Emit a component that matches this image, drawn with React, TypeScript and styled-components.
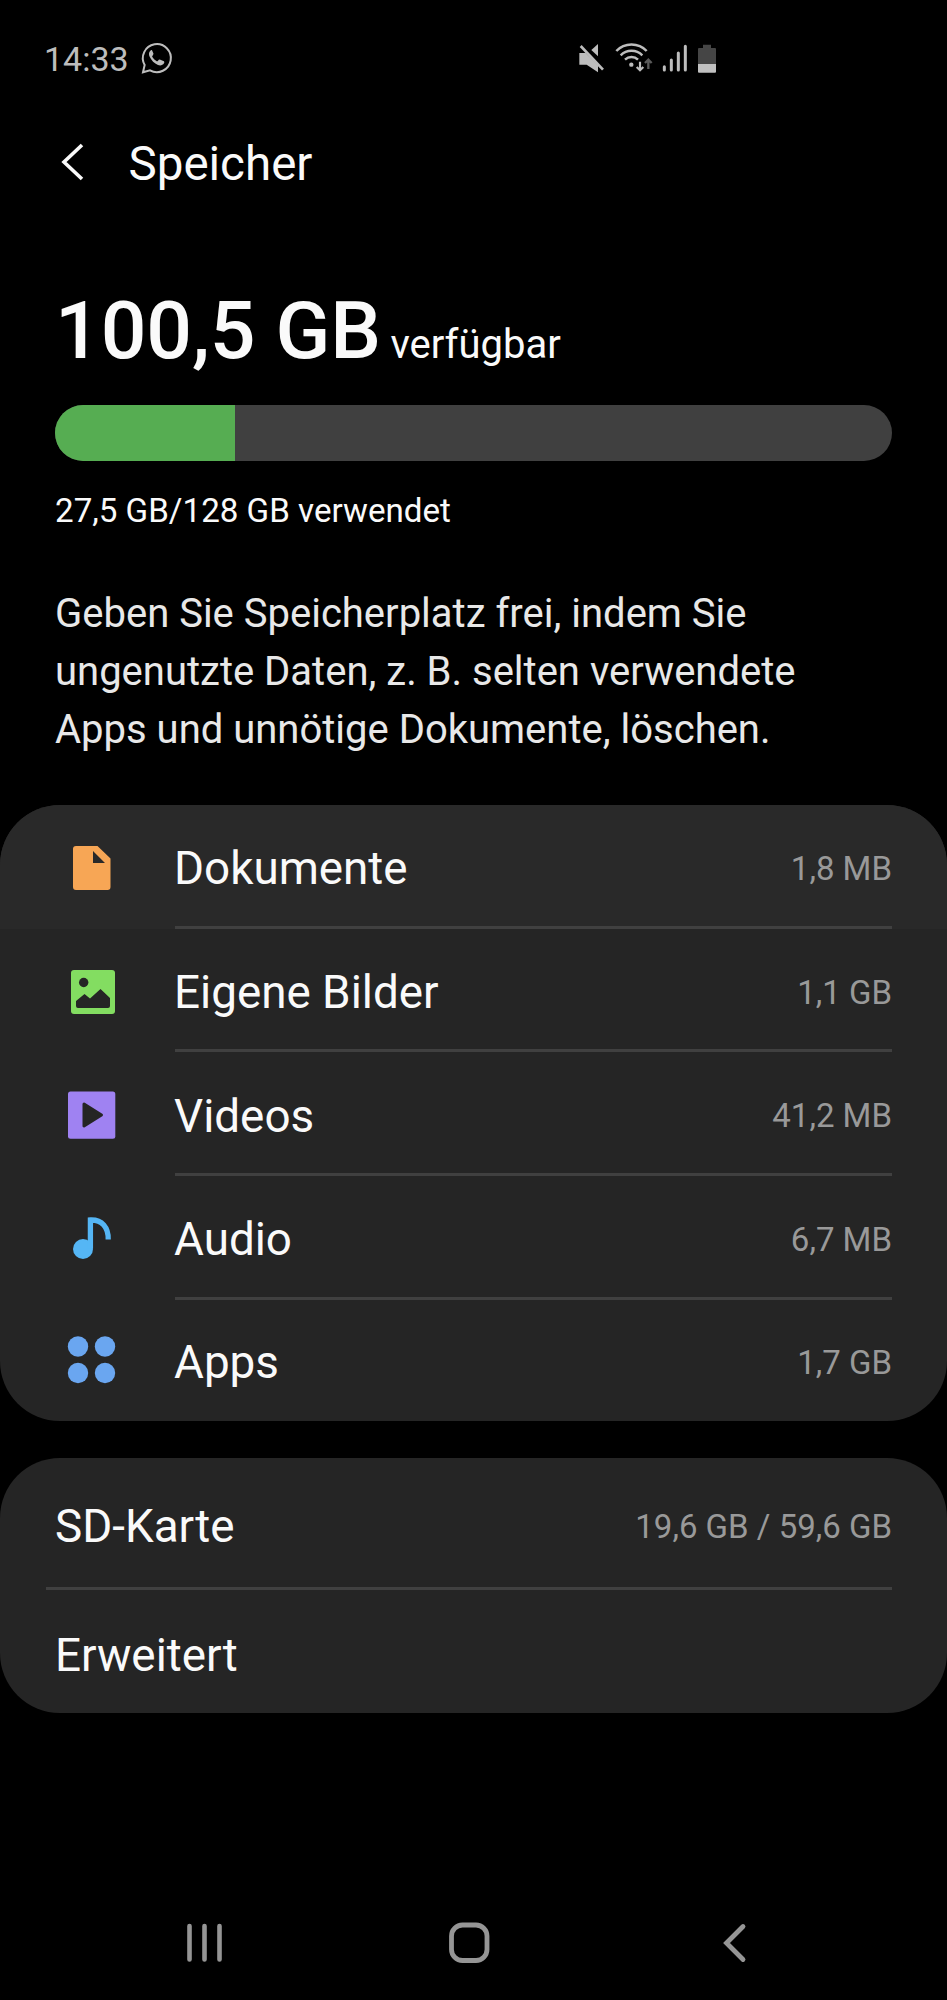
import React from "react";
import styled, { createGlobalStyle } from "styled-components";

const GlobalStyle = createGlobalStyle`
  *, *::before, *::after { box-sizing: border-box; }
  body { margin: 0; background: #000; }
`;

const Screen = styled.main`
  display: flex;
  flex-direction: column;
  width: 947px;
  height: 2000px;
  background: #000;
  color: #fafafa;
  font-family: Roboto, "Liberation Sans", sans-serif;
  overflow: hidden;
  white-space: nowrap;
  svg { display: block; flex: none; overflow: visible; }
`;

const StatusBar = styled.header`
  display: flex;
  align-items: center;
  height: 115px;
  padding: 0 229px 0 44px;
  color: #bdbdbd;
`;

const Clock = styled.time`
  width: 96px;
  font-size: 34px;
  line-height: 40px;
  padding-top: 2px;
`;

const StatusIcons = styled.div`
  display: flex;
  gap: 9px;
  margin-left: auto;
  margin-right: 1px;
`;

const TitleBar = styled.div`
  display: flex;
  align-items: center;
  height: 93px;
  padding: 0 0 0 60px;
`;

const Title = styled.h1`
  margin: 5px 0 0 42.5px;
  font-size: 47.5px;
  line-height: 56px;
  font-weight: 400;
`;

const Summary = styled.section`
  display: flex;
  flex-direction: column;
  height: 597px;
  padding: 77.5px 55px 0;
`;

const Available = styled.div`
  display: flex;
  align-items: baseline;
  gap: 9.5px;
  height: 119.5px;
  line-height: 90px;
`;

const Amount = styled.strong`
  font-size: 80.5px;
  font-weight: 500;
  letter-spacing: -0.1px;
`;

const AmountNote = styled.span`
  font-size: 40px;
`;

const Meter = styled.div`
  height: 56px;
  border-radius: 28px;
  background: #404040;
  overflow: hidden;
`;

const MeterFill = styled.div`
  height: 100%;
  background: #56ad52;
`;

const Used = styled.p`
  margin: 30px 0 0;
  font-size: 33.15px;
  line-height: 40px;
`;

const Hint = styled.p`
  margin: 54px 0 0;
  color: #e8e8e8;
  font-size: 40px;
  line-height: 58px;
`;

const Card = styled.section`
  display: flex;
  flex-direction: column;
  flex: none;
  border-radius: 60px;
  background: #252525;
  overflow: hidden;
  & + & { margin-top: 37px; }
`;

const Row = styled.div<{ $height: number; $inset: number; $nudge: number; $lit?: boolean }>`
  display: grid;
  grid-template-rows: 1fr 3px;
  height: ${(p) => p.$height}px;
  padding: ${(p) => p.$nudge}px 55px 0 ${(p) => p.$inset}px;
  background: ${(p) => (p.$lit ? "#292929" : "transparent")};
`;

const RowBody = styled.div<{ $pad: number }>`
  display: flex;
  align-items: center;
  padding-left: ${(p) => p.$pad}px;
`;

const IconSlot = styled.div`
  width: 106px;
`;

const Label = styled.span`
  padding-top: 2px;
  font-size: 45.8px;
  line-height: 54px;
`;

const Value = styled.span`
  margin-left: auto;
  padding-top: 1px;
  color: #999;
  font-size: 33px;
  line-height: 40px;
`;

const Divider = styled.div<{ $left: number }>`
  margin-left: ${(p) => p.$left}px;
  background: #404040;
`;

const NavBar = styled.nav`
  display: grid;
  grid-template-columns: 40px 42px 28px;
  column-gap: 224px;
  align-items: center;
  height: 115px;
  margin-top: auto;
  padding-left: 185px;
`;

const WhatsAppIcon = () => (
  <svg width="34" height="34" viewBox="420 63 102 102" fill="none">
    <path d="M429 157L434 135A42 42 0 1 1 450 151Z" stroke="currentColor" strokeWidth="6" />
    <path
      d="M451 92c-5 5-5 12-2 18 5 11 14 20 25 25 7 3 14 1 18-5 2-3 1-6-2-7l-9-4c-3-1-5 0-7 3-2 2-3 2-5 1-5-3-9-7-12-12-1-2 0-3 2-6 1-2 2-3 1-5l-4-9c-1-2-3-1-5 1z"
      fill="currentColor"
    />
  </svg>
);

const MuteIcon = () => (
  <svg width="28" height="32" viewBox="57 63 84 96" fill="currentColor">
    <path d="M97 87l20-18v37z" />
    <path d="M65 75l67 71" stroke="#000" strokeWidth="14" />
    <path d="M65 75l67 71" stroke="currentColor" strokeWidth="8" />
    <path d="M61 96h19l37 37v21L83 131H61z" />
  </svg>
);

const WifiIcon = () => (
  <svg width="38" height="32" viewBox="166 63 114 96" fill="none" stroke="currentColor" strokeWidth="7.500">
    <path d="M170 90a63 63 0 0 1 91 0M183 103a46 46 0 0 1 65 0M196 116a28 28 0 0 1 39 0" />
    <circle cx="215" cy="131" r="6.500" fill="currentColor" stroke="none" />
    <path d="M241 122v25M231 138l10 10 10-10" strokeWidth="6.500" />
    <path d="M266 144v-26M256 126l10-10 10 10" strokeWidth="7" stroke="#5a5a5a" />
  </svg>
);

const SignalIcon = () => (
  <svg width="26" height="32" viewBox="306 63 78 96" stroke="currentColor" strokeWidth="9" strokeLinecap="round">
    <path d="M313 137v10M334 117v30M355 96v51M376 76v71" />
  </svg>
);

const BatteryIcon = () => (
  <svg width="20" height="32" viewBox="414 63 60 96">
    <path d="M417 129V84q0-3 3-3h12V71h24v10h12q3 0 3 3v45z" fill="#454545" />
    <path d="M417 129h54v23q0 3-3 3h-48q-3 0-3-3z" fill="#c0c0c0" />
  </svg>
);

const TitleBackIcon = () => (
  <svg width="26" height="40" viewBox="60 141 26 40" fill="none">
    <path d="M82 144L64 161l18 17" stroke="#fafafa" strokeWidth="3.600" />
  </svg>
);

const DocumentIcon = () => (
  <svg width="48" height="48" viewBox="0 0 48 48">
    <path
      d="M8 2h21.500L42.500 14.500V43q0 3-3 3H8q-3 0-3-3V5q0-3 3-3zM25 7v12h12z"
      fill="#f7a655"
      fillRule="evenodd"
    />
  </svg>
);

const ImageIcon = () => (
  <svg width="48" height="48" viewBox="0 0 48 48">
    <rect x="3" y="2" width="44" height="44" rx="3" fill="#83dd61" />
    <circle cx="15.700" cy="14.500" r="4.700" fill="#252525" />
    <path d="M8 33l8.500-7 5.500 4.500L32.500 21l9.500 9v8q0 2-2 2H10q-2 0-2-2z" fill="#252525" />
  </svg>
);

const VideoIcon = () => (
  <svg width="48" height="48" viewBox="0 0 48 48">
    <rect x="0" y="-0.500" width="47.300" height="47.300" rx="2.500" fill="#9f82f2" />
    <path d="M16 12L33.500 23L16 34z" fill="#252525" stroke="#252525" strokeWidth="3" strokeLinejoin="round" />
  </svg>
);

const AudioIcon = () => (
  <svg width="48" height="48" viewBox="0 0 48 48">
    <circle cx="15" cy="34" r="10" fill="#55b6f5" />
    <path d="M22.400 33.500V5C34 4.500 40.500 12.500 40.200 24.500" fill="none" stroke="#55b6f5" strokeWidth="5.300" />
  </svg>
);

const AppsIcon = () => (
  <svg width="48" height="48" viewBox="0 0 48 48" fill="#6aa6f0">
    <circle cx="10" cy="8.500" r="10.200" />
    <circle cx="37" cy="8.500" r="10.200" />
    <circle cx="10" cy="35" r="10.200" />
    <circle cx="37" cy="35" r="10.200" />
  </svg>
);

const RecentsIcon = () => (
  <svg width="40" height="44" viewBox="0 0 40 44" stroke="#959595" strokeWidth="4.600" strokeLinecap="round">
    <path d="M4.500 5v33.500M19.500 5v33.500M34.500 5v33.500" />
  </svg>
);

const HomeIcon = () => (
  <svg width="42" height="44" viewBox="0 0 42 44" fill="none">
    <rect x="2.500" y="4" width="35.500" height="35.500" rx="11" stroke="#959595" strokeWidth="4.800" />
  </svg>
);

const NavBackIcon = () => (
  <svg width="28" height="44" viewBox="0 0 28 44" fill="none">
    <path d="M28 5.500L11.500 22l16.500 16.500" stroke="#959595" strokeWidth="4.800" strokeLinecap="round" />
  </svg>
);

const categories = [
  { label: "Dokumente", value: "1,8 MB", Icon: DocumentIcon },
  { label: "Eigene Bilder", value: "1,1 GB", Icon: ImageIcon },
  { label: "Videos", value: "41,2 MB", Icon: VideoIcon },
  { label: "Audio", value: "6,7 MB", Icon: AudioIcon },
  { label: "Apps", value: "1,7 GB", Icon: AppsIcon },
];

const usedShare = 21.5;

export default function App() {
  return (
    <Screen>
      <GlobalStyle />
      <StatusBar>
        <Clock>14:33</Clock>
        <WhatsAppIcon />
        <StatusIcons>
          <MuteIcon />
          <WifiIcon />
          <SignalIcon />
          <BatteryIcon />
        </StatusIcons>
      </StatusBar>
      <TitleBar>
        <TitleBackIcon />
        <Title>Speicher</Title>
      </TitleBar>
      <Summary>
        <Available>
          <Amount>100,5 GB</Amount>
          <AmountNote>verfügbar</AmountNote>
        </Available>
        <Meter>
          <MeterFill style={{ width: `${usedShare}%` }} />
        </Meter>
        <Used>27,5 GB/128 GB verwendet</Used>
        <Hint>
          Geben Sie Speicherplatz frei, indem Sie
          <br />
          ungenutzte Daten, z. B. selten verwendete
          <br />
          Apps und unnötige Dokumente, löschen.
        </Hint>
      </Summary>
      <Card>
        {categories.map(({ label, value, Icon }, i) => {
          const last = i === categories.length - 1;
          return (
            <Row key={label} $height={last ? 121.5 : 123.7} $inset={68} $nudge={6} $lit={i === 0}>
              <RowBody $pad={0}>
                <IconSlot>
                  <Icon />
                </IconSlot>
                <Label>{label}</Label>
                <Value>{value}</Value>
              </RowBody>
              {!last && <Divider $left={106.5} />}
            </Row>
          );
        })}
      </Card>
      <Card>
        <Row $height={131.5} $inset={46} $nudge={7}>
          <RowBody $pad={9}>
            <Label>SD-Karte</Label>
            <Value>19,6 GB / 59,6 GB</Value>
          </RowBody>
          <Divider $left={0} />
        </Row>
        <Row $height={123.5} $inset={46} $nudge={9}>
          <RowBody $pad={9}>
            <Label>Erweitert</Label>
          </RowBody>
        </Row>
      </Card>
      <NavBar>
        <RecentsIcon />
        <HomeIcon />
        <NavBackIcon />
      </NavBar>
    </Screen>
  );
}
